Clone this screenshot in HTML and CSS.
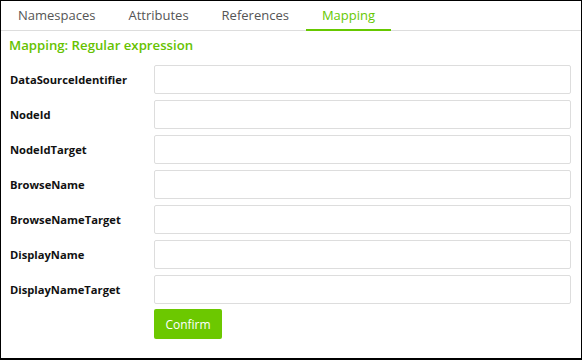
FILE: index.html
```html
<!DOCTYPE html>
<html lang="en">

<head>
    <meta charset="UTF-8">
    <title>Mapping</title>
    <link rel="stylesheet" href="styles.css">
</head>

<body>
    <div class="frame">
        <ul class="tabs">
            <li class="tab">Namespaces</li>
            <li class="tab">Attributes</li>
            <li class="tab">References</li>
            <li class="tab active">Mapping</li>
        </ul>
        <h2 class="heading">Mapping: Regular expression</h2>
        <form class="form">
            <div class="row"><label>DataSourceIdentifier</label><input type="text"></div>
            <div class="row"><label>NodeId</label><input type="text"></div>
            <div class="row"><label>NodeIdTarget</label><input type="text"></div>
            <div class="row"><label>BrowseName</label><input type="text"></div>
            <div class="row"><label>BrowseNameTarget</label><input type="text"></div>
            <div class="row"><label>DisplayName</label><input type="text"></div>
            <div class="row"><label>DisplayNameTarget</label><input type="text"></div>
            <div class="row"><span class="spacer"></span><button type="button" class="confirm">Confirm</button></div>
        </form>
    </div>
</body>

</html>
```

FILE: styles.css
```css
* {
    margin: 0;
    padding: 0;
    box-sizing: border-box;
}

body {
    font-family: "Open Sans", "Noto Sans", sans-serif;
    background: #fff;
}

.frame {
    width: 582px;
    height: 360px;
    border: 1px solid #000;
    border-bottom-width: 2px;
}

.tabs {
    list-style: none;
    display: flex;
    height: 30px;
    border-bottom: 1px solid #ddd;
    padding-left: 1px;
}

.tab {
    padding: 0 16px;
    margin-right: 1px;
    font-size: 13px;
    line-height: 29px;
    color: #555;
}

.tab.active {
    color: #66c800;
    border-bottom: 2px solid #66c800;
    margin-bottom: -1px;
}

.heading {
    font-size: 13.2px;
    font-weight: 600;
    color: #66c200;
    margin: 5px 0 0 8px;
    line-height: 18px;
}

.form {
    padding: 11px 10px 0 9px;
}

.row {
    display: flex;
    align-items: center;
    margin-bottom: 6px;
}

.row label,
.spacer {
    width: 144px;
    flex: none;
    font-size: 11.2px;
    font-weight: 700;
    color: #111;
}

.row input {
    flex: 1;
    height: 29px;
    border: 1px solid #ddd;
    border-radius: 2px;
}

.confirm {
    width: 68px;
    height: 30px;
    margin-top: -1px;
    background: #6cc800;
    border: none;
    border-radius: 2px;
    color: #fff;
    font-family: inherit;
    font-size: 12px;
}
```
